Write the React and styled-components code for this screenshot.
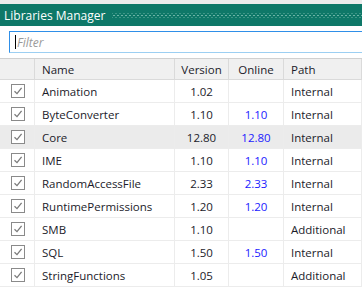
import React from "react";
import styled, { createGlobalStyle } from "styled-components";

const GlobalStyle = createGlobalStyle`
  html, body {
    margin: 0;
    padding: 0;
    background: #ffffff;
    overflow: hidden;
  }
  body {
    font-family: "Open Sans", "Noto Sans", sans-serif;
  }
`

const Panel = styled.div`
  width: 362px;
  height: 289px;
  display: flex;
  flex-direction: column;
  background: #fff;
  overflow: hidden;
`

const TopStrip = styled.div`
  height: 4px;
  background: #ececec;
`

const TitleBar = styled.div`
  height: 22px;
  display: flex;
  align-items: center;
  gap: 7px;
  padding-left: 4px;
  background: #0e7868;
  color: #ffffff;
  font-size: 12px;
`

const Grip = styled.div`
  flex: 1;
  height: 5px;
  background:
    radial-gradient(circle, #6cb3a6 0.9px, transparent 1.1px) 0 0 / 4px 5px,
    radial-gradient(circle, #6cb3a6 0.9px, transparent 1.1px) 2px 2.5px / 4px 5px;
`

const FilterArea = styled.div`
  padding: 5px 0 5px 9px;
  border-bottom: 1px solid #d0d0d0;
`

const FilterInput = styled.div`
  height: 20px;
  display: flex;
  align-items: center;
  padding-left: 5px;
  border: 1px solid #2f8fe8;
  border-bottom-color: #9ccff2;
  border-right: none;
  color: #9a9a9a;
  font-style: italic;
  font-size: 12px;
`

const Caret = styled.span`
  display: inline-block;
  width: 1px;
  height: 14px;
  background: #000;
  margin-right: 1px;
`

const Grid = styled.div`
  display: grid;
  grid-template-columns: 35px 140px 54px 55px 1fr;
`

const HeadCell = styled.div`
  height: 20px;
  display: flex;
  align-items: center;
  justify-content: ${p => (p.$center ? "center" : "flex-start")};
  padding-left: ${p => (p.$center ? "0" : "7px")};
  background: #f0f0f0;
  border-right: 1px solid #dadada;
  border-bottom: 1px solid #dadada;
  color: #1b1b2a;
  font-size: 11.5px;
`

const Cell = styled.div`
  height: 22px;
  display: flex;
  align-items: center;
  justify-content: ${p => (p.$center ? "center" : "flex-start")};
  padding-left: ${p => (p.$center ? "0" : "7px")};
  background: ${p => (p.$active ? "#ebebeb" : "#ffffff")};
  border-right: 1px solid #ececec;
  border-bottom: 1px solid #ececec;
  color: ${p => (p.$online ? "#1a1aff" : "#1b1b2a")};
  font-size: 11.5px;
  white-space: nowrap;
`

const Box = styled.span`
  width: 12px;
  height: 12px;
  margin-left: 2px;
  border: 1px solid #8a8a8a;
  background: #fff;
  display: flex;
  align-items: center;
  justify-content: center;
`

const Check = () => (
  <Box>
    <svg width="10" height="10" viewBox="0 0 10 10">
      <path d="M1.5 5.2 L4 7.6 L8.6 1.8" fill="none" stroke="#7a7a7a" strokeWidth="1.3" />
    </svg>
  </Box>
);

const libs = [
  ["Animation", "1.02", "", "Internal"],
  ["ByteConverter", "1.10", "1.10", "Internal"],
  ["Core", "12.80", "12.80", "Internal"],
  ["IME", "1.10", "1.10", "Internal"],
  ["RandomAccessFile", "2.33", "2.33", "Internal"],
  ["RuntimePermissions", "1.20", "1.20", "Internal"],
  ["SMB", "1.10", "", "Additional"],
  ["SQL", "1.50", "1.50", "Internal"],
  ["StringFunctions", "1.05", "", "Additional"],
];

const App = () => {
  return (
    <Panel>
      <GlobalStyle />
      <TopStrip />
      <TitleBar>
        Libraries Manager
        <Grip />
      </TitleBar>
      <FilterArea>
        <FilterInput>
          <Caret />
          Filter
        </FilterInput>
      </FilterArea>
      <Grid>
        <HeadCell />
        <HeadCell>Name</HeadCell>
        <HeadCell $center>Version</HeadCell>
        <HeadCell $center>Online</HeadCell>
        <HeadCell>Path</HeadCell>
        {libs.map(([name, version, online, path]) => {
          const active = name === "Core";
          return (
            <React.Fragment key={name}>
              <Cell $active={active} $center><Check /></Cell>
              <Cell $active={active}>{name}</Cell>
              <Cell $active={active} $center>{version}</Cell>
              <Cell $active={active} $center $online>{online}</Cell>
              <Cell $active={active}>{path}</Cell>
            </React.Fragment>
          );
        })}
      </Grid>
    </Panel>
  );
}

export default App;
